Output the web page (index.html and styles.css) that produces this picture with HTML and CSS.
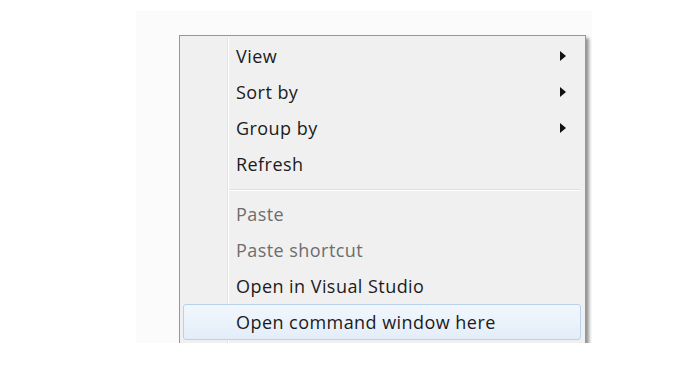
FILE: index.html
```html
<!DOCTYPE html>
<html lang="en">
<head>
    <meta charset="UTF-8">
    <title>Context menu</title>
    <link rel="stylesheet" href="styles.css">
</head>
<body>
    <div class="desktop">
        <div class="menu">
            <div class="item sub"><span class="label">View</span><span class="arrow"></span></div>
            <div class="item sub"><span class="label">Sort by</span><span class="arrow"></span></div>
            <div class="item sub"><span class="label">Group by</span><span class="arrow"></span></div>
            <div class="item"><span class="label">Refresh</span></div>
            <div class="sep"></div>
            <div class="item off"><span class="label">Paste</span></div>
            <div class="item off"><span class="label">Paste shortcut</span></div>
            <div class="item"><span class="label">Open in Visual Studio</span></div>
            <div class="item hover"><span class="label">Open command window here</span></div>
        </div>
    </div>
</body>
</html>
```

FILE: styles.css
```css
body {
    margin: 0;
    background: #fff;
    font-family: "Open Sans", "Liberation Sans", sans-serif;
}
.desktop {
    width: 456px;
    height: 332px;
    margin: 11px 0 0 136px;
    padding: 24px 0 0 43px;
    box-sizing: border-box;
    background: #fbfbfb;
    overflow: hidden;
}
.menu {
    position: relative;
    width: 407px;
    height: 340px;
    box-sizing: border-box;
    border: 1px solid #979797;
    padding: 2px 0;
    background: #f0f0f0;
    box-shadow: 3px 3px 3px rgba(0, 0, 0, 0.4);
}
/* icon gutter line */
.menu::before {
    content: "";
    position: absolute;
    top: 2px;
    bottom: 0;
    left: 47px;
    width: 1px;
    background: #e2e3e3;
    border-right: 1px solid #fff;
}
.item {
    position: relative;
    display: flex;
    align-items: center;
    height: 36px;
    margin: 0 4px 0 3px;
    padding-left: 53px;
    padding-right: 15px;
    font-size: 18px;
    letter-spacing: 0.45px;
    color: #1b1b1b;
}
.item .label {
    flex: 1;
}
.item.off {
    color: #6d6d6d;
}
.item.hover {
    box-sizing: border-box;
    border: 1px solid #b8d2ee;
    border-radius: 3px;
    background: linear-gradient(#f2f7fd, #e3edf9);
    padding-left: 52px;
}
.arrow {
    width: 0;
    height: 0;
    border-top: 5px solid transparent;
    border-bottom: 5px solid transparent;
    border-left: 6px solid #111;
}
.sep {
    height: 14px;
    margin: 0 5px 0 49px;
    position: relative;
}
.sep::after {
    content: "";
    position: absolute;
    left: 0;
    right: 0;
    top: 7px;
    height: 1px;
    background: #e0e0e0;
    border-bottom: 1px solid #fff;
}
```
